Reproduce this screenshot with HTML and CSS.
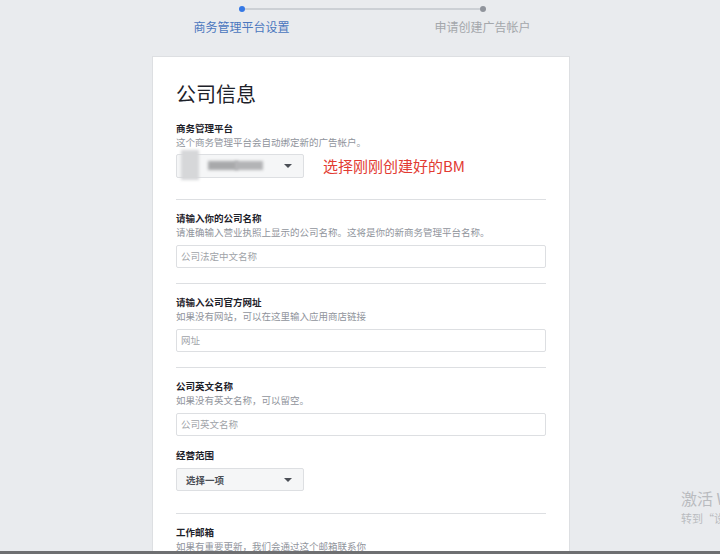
FILE: index.html
```html
<!DOCTYPE html>
<html lang="zh-CN">
<head>
<meta charset="utf-8">
<title>公司信息</title>
<link rel="stylesheet" href="styles.css">
</head>
<body>
<div class="screen">
  <div class="stepper">
    <div class="track">
      <span class="dot dot-active"></span>
      <span class="line"></span>
      <span class="dot"></span>
    </div>
    <div class="step-labels">
      <span class="step-label active">商务管理平台设置</span>
      <span class="step-label">申请创建广告帐户</span>
    </div>
  </div>

  <div class="card">
    <div class="section first">
      <h1 class="title">公司信息</h1>
      <div class="label">商务管理平台</div>
      <div class="desc">这个商务管理平台会自动绑定新的广告帐户。</div>
      <div class="select-row">
        <div class="select blurred">
          <span class="blur blur-a"></span>
          <span class="blur blur-b"></span>
          <span class="blur blur-c"></span>
          <span class="caret"></span>
        </div>
        <span class="note">选择刚刚创建好的BM</span>
      </div>
    </div>

    <div class="section">
      <div class="label">请输入你的公司名称</div>
      <div class="desc">请准确输入营业执照上显示的公司名称。这将是你的新商务管理平台名称。</div>
      <div class="input">公司法定中文名称</div>
    </div>

    <div class="section">
      <div class="label">请输入公司官方网址</div>
      <div class="desc">如果没有网站，可以在这里输入应用商店链接</div>
      <div class="input">网址</div>
    </div>

    <div class="section tall">
      <div class="label">公司英文名称</div>
      <div class="desc">如果没有英文名称，可以留空。</div>
      <div class="input">公司英文名称</div>
      <div class="label sub">经营范围</div>
      <div class="select choose">
        <span class="choose-text">选择一项</span>
        <span class="caret"></span>
      </div>
    </div>

    <div class="section">
      <div class="label">工作邮箱</div>
      <div class="desc">如果有重要更新，我们会通过这个邮箱联系你</div>
    </div>
  </div>

  <div class="watermark">
    <div class="wm-big">激活 Windows</div>
    <div class="wm-small">转到“设置”以激活 Windows。</div>
  </div>
</div>
<div class="taskbar"></div>
</body>
</html>
```

FILE: styles.css
```css
* { box-sizing: border-box; }

html, body {
  margin: 0;
  padding: 0;
}

body {
  width: 720px;
  height: 554px;
  overflow: hidden;
  background: #e9ebee;
  font-family: "Noto Sans CJK SC", "Noto Sans", sans-serif;
  color: #1d2129;
}

.screen {
  position: relative;
  height: 551px;
  overflow: hidden;
}

.taskbar {
  height: 3px;
  background: #6e6f71;
}

/* stepper */
.stepper {
  width: 482px;
  height: 56px;
  margin-left: 121px;
  padding-top: 6px;
}

.track {
  display: flex;
  align-items: center;
  height: 6px;
  padding: 0 117.5px;
}

.dot {
  width: 6px;
  height: 6px;
  border-radius: 50%;
  background: #90949c;
  flex: none;
}

.dot-active { background: #3578e5; }

.line {
  flex: 1;
  height: 2px;
  background: #ccd0d5;
}

.step-labels {
  display: grid;
  grid-template-columns: 1fr 1fr;
  margin-top: 7px;
}

.step-label {
  text-align: center;
  font-size: 12px;
  line-height: 16px;
  color: #a4a7ab;
}

.step-label.active { color: #4b77be; }

/* card */
.card {
  width: 418px;
  margin-left: 152px;
  min-height: 520px;
  background: #fff;
  border: 1px solid #dddfe2;
  border-bottom: none;
  padding: 0 23px;
}

.section {
  border-top: 1px solid #dddfe2;
  padding: 11px 0 15px;
}

.section.first {
  border-top: none;
  padding: 25px 0 21px;
}

.section.tall { padding-bottom: 22px; }

.title {
  margin: 0 0 15px;
  font-size: 20px;
  line-height: 24px;
  font-weight: 400;
  color: #1d2129;
}

.label {
  font-size: 9.5px;
  line-height: 14px;
  font-weight: 700;
  color: #1d2129;
}

.label.sub { margin-top: 12px; }

.desc {
  font-size: 9.5px;
  line-height: 14px;
  color: #90949c;
}

.input {
  margin-top: 6px;
  height: 23px;
  border: 1px solid #dddfe2;
  border-radius: 2px;
  padding: 0 4px;
  font-size: 9.5px;
  line-height: 21px;
  color: #a0a3a8;
  background: #fff;
}

.select-row {
  display: flex;
  align-items: center;
  gap: 19px;
  margin-top: 5px;
}

.select {
  position: relative;
  width: 128px;
  height: 24px;
  border: 1px solid #dddfe2;
  border-radius: 2px;
  background: #f5f6f7;
  display: flex;
  align-items: center;
}

.select.choose {
  margin-top: 6px;
  height: 23px;
  padding-left: 9px;
}

.choose-text {
  font-size: 9.5px;
  font-weight: 700;
  color: #4b4f56;
}

.caret {
  position: absolute;
  right: 11px;
  top: 50%;
  margin-top: -2px;
  width: 0;
  height: 0;
  border-left: 4px solid transparent;
  border-right: 4px solid transparent;
  border-top: 4px solid #4b4f56;
}

.blur {
  position: absolute;
  filter: blur(1.6px);
}

.blur-a {
  left: 4px;
  top: -5px;
  width: 18px;
  height: 30px;
  background: #d6d7d9;
}

.blur-b {
  left: 31px;
  top: 6px;
  width: 30px;
  height: 9px;
  background: #a8a9ab;
}

.blur-c {
  left: 58px;
  top: 6px;
  width: 28px;
  height: 9px;
  background: #b3b4b6;
}

.note {
  font-size: 15px;
  line-height: 20px;
  color: #e23b32;
}

/* watermark overlay */
.watermark {
  position: absolute;
  left: 681px;
  top: 488px;
  white-space: nowrap;
  color: #b9bbbf;
}

.wm-big {
  font-size: 16px;
  line-height: 20px;
}

.wm-small {
  font-size: 11px;
  line-height: 16px;
  margin-top: 2px;
}
```
